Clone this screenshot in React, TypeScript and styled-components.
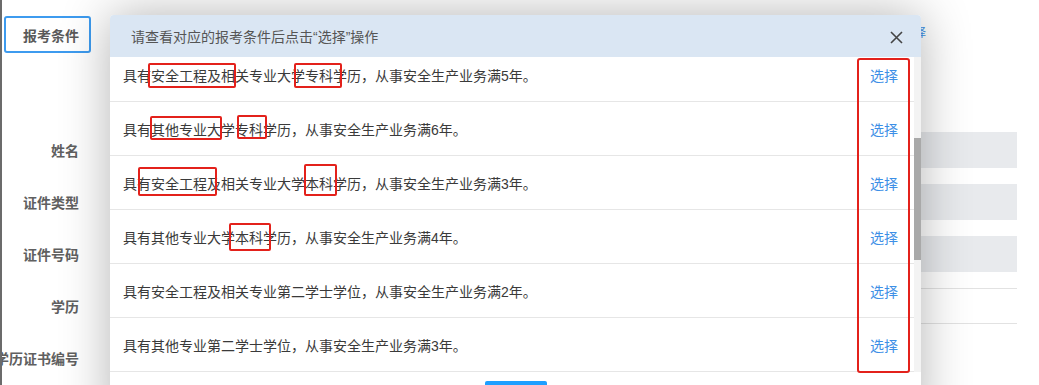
import React from 'react'
import styled, { createGlobalStyle } from 'styled-components'

type Box = { x: number; y: number; w: number; h: number }
type Condition = { text: string; marks: Box[] }

const conditions: Condition[] = [
  {
    text: '具有安全工程及相关专业大学专科学历，从事安全生产业务满5年。',
    marks: [
      { x: 38, y: 15, w: 88, h: 25 },
      { x: 184, y: 15, w: 48, h: 25 },
    ],
  },
  {
    text: '具有其他专业大学专科学历，从事安全生产业务满6年。',
    marks: [
      { x: 40, y: 14, w: 72, h: 24 },
      { x: 127, y: 13, w: 30, h: 24 },
    ],
  },
  {
    text: '具有安全工程及相关专业大学本科学历，从事安全生产业务满3年。',
    marks: [
      { x: 28, y: 11, w: 79, h: 29 },
      { x: 194, y: 8, w: 33, h: 32 },
    ],
  },
  {
    text: '具有其他专业大学本科学历，从事安全生产业务满4年。',
    marks: [{ x: 119, y: 13, w: 42, h: 28 }],
  },
  { text: '具有安全工程及相关专业第二学士学位，从事安全生产业务满2年。', marks: [] },
  { text: '具有其他专业第二学士学位，从事安全生产业务满3年。', marks: [] },
]

const fields = [
  { label: '姓名', kind: 'filled' },
  { label: '证件类型', kind: 'filled' },
  { label: '证件号码', kind: 'filled' },
  { label: '学历', kind: 'lined' },
  { label: '学历证书编号', kind: 'blank' },
] as const

export default function App() {
  return (
    <>
      <GlobalStyle />
      <Page>
        <TopRow>
          <TabBox>报考条件</TabBox>
          <TopLink>选择</TopLink>
        </TopRow>

        <FieldList>
          {fields.map((f) => (
            <FieldRow key={f.label}>
              <Label>{f.label}</Label>
              <Input $kind={f.kind} />
            </FieldRow>
          ))}
        </FieldList>

        <Modal>
          <Header>
            <span>请查看对应的报考条件后点击“选择”操作</span>
            <CloseIcon width="13" height="13" viewBox="0 0 13 13">
              <path d="M1 1 L12 12 M12 1 L1 12" stroke="#444" strokeWidth="1.6" fill="none" />
            </CloseIcon>
          </Header>

          <Body>
            <List>
              <ListInner $offset={9}>
                {conditions.map((c) => (
                  <Row key={c.text}>
                    <span>{c.text}</span>
                    <SelectLink>选择</SelectLink>
                    {c.marks.map((m, i) => (
                      <Mark key={i} $x={m.x} $y={m.y} $w={m.w} $h={m.h} />
                    ))}
                  </Row>
                ))}
              </ListInner>
            </List>
            <Scrollbar>
              <Thumb />
            </Scrollbar>
            <ColumnMark />
          </Body>

          <Footer>
            <OkButton>确定</OkButton>
          </Footer>
        </Modal>
      </Page>
    </>
  )
}

/* ================= STYLES ================= */

const GlobalStyle = createGlobalStyle`
  html, body {
    margin: 0;
    padding: 0;
    background: #fff;
  }
  body {
    font-family: "Liberation Sans", "Noto Sans CJK SC", sans-serif;
  }
`

const Page = styled.div`
  position: relative;
  width: 1039px;
  height: 385px;
  overflow: hidden;
  box-sizing: border-box;
  border-left: 2px solid #6b6b6b;
  padding: 16px 22px 0 0;
  background: #fff;
`

const TopRow = styled.div`
  display: flex;
  align-items: center;
  height: 37px;
`

const TabBox = styled.div`
  box-sizing: border-box;
  display: flex;
  align-items: center;
  width: 87px;
  height: 37px;
  margin-left: 2px;
  padding-left: 17px;
  border: 2px solid #3d9bef;
  border-radius: 3px;
  font-size: 14px;
  font-weight: bold;
  color: #5a5a5a;
`

const TopLink = styled.span`
  margin-left: auto;
  margin-right: 91px;
  margin-top: -6px;
  font-size: 12px;
  color: #3d8fe6;
`

const FieldList = styled.div`
  display: flex;
  flex-direction: column;
  margin-top: 71px;
`

const FieldRow = styled.div`
  display: grid;
  grid-template-columns: 77px 1fr;
  column-gap: 70px;
  align-items: center;
  height: 52px;
`

const Label = styled.div`
  display: flex;
  justify-content: flex-end;
  white-space: nowrap;
  font-size: 14px;
  font-weight: bold;
  color: #606060;
`

const Input = styled.div<{ $kind: 'filled' | 'lined' | 'blank' }>`
  box-sizing: border-box;
  height: 36px;
  background: ${(p) => (p.$kind === 'filled' ? '#e8eaed' : '#fff')};
  border-top: 1px solid ${(p) => (p.$kind === 'lined' ? '#e2e2e2' : 'transparent')};
  border-bottom: 1px solid ${(p) => (p.$kind === 'lined' ? '#e2e2e2' : 'transparent')};
`

const Modal = styled.div`
  position: absolute;
  left: 108px;
  top: 15px;
  width: 811px;
  background: #fff;
  border-radius: 4px 4px 0 0;
  box-shadow: 0 0 50px rgba(0, 0, 0, 0.3);
`

const Header = styled.div`
  display: flex;
  align-items: center;
  justify-content: space-between;
  height: 42px;
  padding: 0 18px 0 21px;
  background: #dae6f3;
  border-radius: 4px 4px 0 0;
  font-size: 14px;
  color: #555;
`

const CloseIcon = styled.svg`
  display: block;
  margin-top: 2px;
`

const Body = styled.div`
  position: relative;
  display: flex;
  height: 315px;
`

const List = styled.div`
  flex: 1;
  overflow: hidden;
`

const ListInner = styled.div<{ $offset: number }>`
  margin-top: ${(p) => -p.$offset}px;
`

const Row = styled.div`
  position: relative;
  box-sizing: border-box;
  display: flex;
  align-items: center;
  justify-content: space-between;
  height: 54px;
  padding: 0 16px 0 13px;
  border-bottom: 1px solid #e6e6e6;
  font-size: 14px;
  color: #3a3a3a;
  white-space: nowrap;
`

const SelectLink = styled.span`
  color: #3d8fe6;
  cursor: pointer;
`

const Mark = styled.div<{ $x: number; $y: number; $w: number; $h: number }>`
  position: absolute;
  left: ${(p) => p.$x}px;
  top: ${(p) => p.$y}px;
  width: ${(p) => p.$w}px;
  height: ${(p) => p.$h}px;
  box-sizing: border-box;
  border: 2px solid #e3211b;
  border-radius: 2px;
`

const ColumnMark = styled.div`
  position: absolute;
  left: 747px;
  top: 1px;
  width: 53px;
  height: 315px;
  box-sizing: border-box;
  border: 2px solid #e3211b;
  border-radius: 3px;
`

const Scrollbar = styled.div`
  flex-shrink: 0;
  box-sizing: border-box;
  width: 7px;
  padding-top: 81px;
  background: #f3f3f3;
`

const Thumb = styled.div`
  height: 122px;
  background: #a9a9a9;
`

const Footer = styled.div`
  display: flex;
  justify-content: center;
  padding: 9px 0 20px;
`

const OkButton = styled.button`
  width: 62px;
  height: 30px;
  border: none;
  border-radius: 2px;
  background: #1e9fff;
  color: #fff;
  font-size: 14px;
  font-family: inherit;
`
